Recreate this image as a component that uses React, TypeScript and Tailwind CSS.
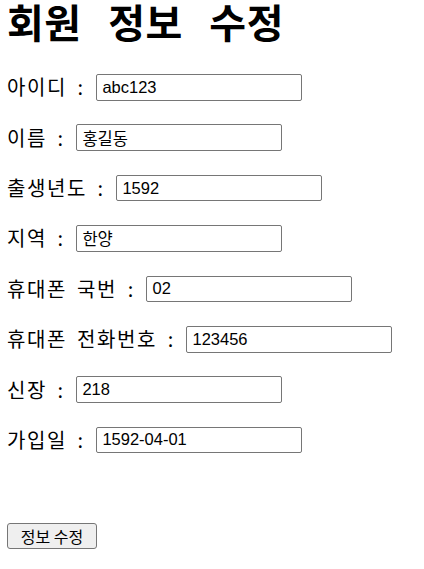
const fields = [
  { label: '아이디', value: 'abc123' },
  { label: '이름', value: '홍길동' },
  { label: '출생년도', value: '1592' },
  { label: '지역', value: '한양' },
  { label: '휴대폰 국번', value: '02' },
  { label: '휴대폰 전화번호', value: '123456' },
  { label: '신장', value: '218' },
  { label: '가입일', value: '1592-04-01' },
];

export default function App() {
  return (
    <div className="min-h-[569px] bg-white px-[7px] text-black font-['Noto_Sans_CJK_KR',sans-serif]">
      <h1 className="text-[40px] leading-[42px] font-bold tracking-[0.5px] [word-spacing:17px] whitespace-nowrap">
        회원 정보 수정
      </h1>

      <form className="mt-[32px] flex flex-col gap-[23.7px]" onSubmit={(e) => e.preventDefault()}>
        {fields.map((f) => (
          <div key={f.label} className="flex items-center h-[26.7px]">
            <span className="text-[20px] leading-none whitespace-pre tracking-[1.6px] [word-spacing:4px]">{f.label}</span>
            <span className="ml-[9.4px] mr-[12px] w-[8px] text-center text-[20px] leading-none">:</span>
            <input
              type="text"
              defaultValue={f.value}
              className="w-[206px] h-[26.7px] border border-[#767676] rounded-[2px] pl-[5px] text-[16.5px] font-['Liberation_Sans','Noto_Sans_CJK_KR',sans-serif] outline-none"
            />
          </div>
        ))}

        <div className="mt-[46px]">
          <button
            type="submit"
            className="w-[90px] h-[26px] bg-[#efefef] border border-[#767676] rounded-[3px] text-[16px] leading-none"
          >
            정보 수정
          </button>
        </div>
      </form>
    </div>
  );
}
